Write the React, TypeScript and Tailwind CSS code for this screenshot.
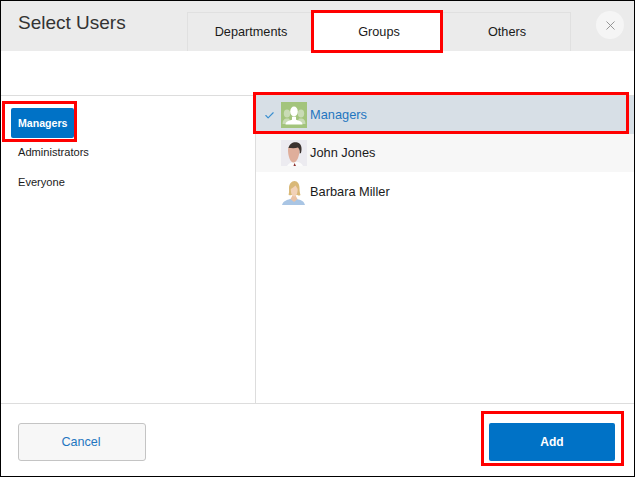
import { Check, X } from 'lucide-react'

function GroupAvatar() {
  return (
    <svg width="26" height="26" viewBox="0 0 26 26" className="shrink-0">
      <rect width="26" height="26" fill="#a3c47c" />
      <g fill="#c9dbb5">
        <ellipse cx="6" cy="11.500" rx="3.200" ry="4" />
        <path d="M1.500 22c0-3.500 1.500-5 3.500-5.500h3l3 5.500z" />
        <ellipse cx="20" cy="11.500" rx="3.200" ry="4" />
        <path d="M24.500 22c0-3.500-1.500-5-3.500-5.500h-3l-3 5.500z" />
      </g>
      <ellipse cx="13" cy="9.500" rx="3.800" ry="5" fill="#fff" />
      <path d="M4.500 22.500c0-3.500 4-3.800 6.500-4.800v-3h4v3c2.500 1 6.500 1.300 6.500 4.800z" fill="#fff" />
    </svg>
  )
}

function JohnAvatar() {
  return (
    <svg width="26" height="26" viewBox="0 0 26 26" className="shrink-0">
      <rect width="26" height="26" fill="#ecebf0" />
      <path d="M6 26c1-2.500 4-3.500 6-4h5c2 .5 4 1.500 5 4z" fill="#fbfbfb" />
      <path d="M12.500 26l1-3 1.500 3z" fill="#8a3030" />
      <path d="M7 10c0-4 3-6 6.500-5.500 3.500.5 5.500 3 5 7-.5 5-2.500 11-6 11-3.500 0-5.500-7-5.500-12.500z" fill="#dfae9b" />
      <path d="M7.500 8c1-4.500 5-6.500 9-5.500 3.500 1 5 5 3.500 10.500l-1.300.5c.3-2.500-.2-4.500-1.700-6-3 1-6.500 .5-9.500 .5z" fill="#3a322e" />
    </svg>
  )
}

function BarbaraAvatar() {
  return (
    <svg width="26" height="26" viewBox="0 0 26 26" className="shrink-0">
      <rect width="26" height="26" fill="#fff" />
      <path d="M1 26c1-4 5-5 8-6h7c4 1 7 2 8 6z" fill="#a9c5e4" />
      <path d="M9.500 20l3.500 3 3.500-3-2-3.500h-3z" fill="#eac2a5" />
      <path d="M8 9c0-4 2.500-7 5.500-7s5 3 5 7c0 3 .5 5.500 1 7-1.500 1-2.500.5-3 0h-6c-1 .5-2 .5-3-.5 .8-1.500.5-3.500.5-6.500z" fill="#d9b877" />
      <path d="M9.800 10c1.500-1 3.200-2 4.700-3.500 1 1.500 1.700 2.500 2.200 3.500 0 4-1.200 7.500-3.500 7.500s-3.400-3.500-3.400-7.500z" fill="#f2d2b8" />
    </svg>
  )
}

function Row({ name, avatar, className = '' }: { name: string; avatar: React.ReactNode; className?: string }) {
  return (
    <div className={`flex items-center gap-[3px] pl-[25px] text-[12.8px] text-[#1a1a1a] ${className}`}>
      {avatar}
      <span>{name}</span>
    </div>
  )
}

export default function App() {
  return (
    <div className="flex h-[477px] w-[635px] flex-col overflow-hidden border border-black bg-white font-['Liberation_Sans',Arial,sans-serif]">
      <div className="flex h-[50px] shrink-0 items-end bg-[#ebebeb] pr-[10px]">
        <div className="h-full w-[186px] pl-[17px] pt-[10px] text-[19px] leading-[24px] text-[#333]">
          Select Users
        </div>
        <div className="flex h-[39px] border-t border-l border-r border-[#e0e0e0]">
          <div className="flex w-[124px] items-center justify-center pl-[2px] pt-[1px] text-[12.7px] text-[#1a1a1a]">Departments</div>
          <div className="relative z-10 flex w-[130px] items-center justify-center bg-white pl-[4px] pt-[1px] text-[12.7px] text-[#1a1a1a]">
            Groups
            <div className="absolute -top-[3px] -right-[1px] -bottom-[2px] -left-[1px] border-[3px] border-[#f00]" />
          </div>
          <div className="flex w-[128px] items-center justify-center pl-[2px] pt-[1px] text-[12.7px] text-[#1a1a1a]">Others</div>
        </div>
        <div className="ml-auto mb-[12px] flex h-[28px] w-[28px] items-center justify-center self-end rounded-full bg-[#f5f5f5] text-[#888]">
          <X size={15} strokeWidth={1.4} />
        </div>
      </div>

      <div className="h-[45px] shrink-0 border-b border-[#dddddd]" />

      <div className="flex min-h-0 flex-1">
        <div className="w-[255px] shrink-0 border-r border-[#dddddd] text-[11.1px] text-[#1a1a1a]">
          <div className="relative ml-[10px] mt-[12px] flex h-[30px] w-[63px] items-center rounded-[2px] bg-[#0072c6] pl-[7px] pt-[1px] text-[10.6px] font-bold text-white">
            Managers
            <div className="absolute -top-[7px] -left-[9px] h-[41px] w-[75px] border-[3px] border-[#f00]" />
          </div>
          <div className="mt-[7px] flex h-[15px] items-center pl-[17px]">Administrators</div>
          <div className="mt-[15px] flex h-[15px] items-center pl-[17px]">Everyone</div>
        </div>

        <div className="min-w-0 flex-1">
          <div className="relative flex h-[38px] items-center bg-[#d7dfe6] pl-[8px] text-[12.8px] text-[#1f76c0]">
            <Check size={11} strokeWidth={2.5} className="w-[11px] shrink-0 text-[#3a8fd0]" />
            <span className="ml-[6px]"><GroupAvatar /></span>
            <span className="ml-[3px]">Managers</span>
            <div className="absolute -top-[4px] -left-[3px] h-[42px] w-[376px] border-[3px] border-[#f00]" />
          </div>
          <Row name="John Jones" avatar={<JohnAvatar />} className="h-[38px] bg-[#f7f7f7]" />
          <Row name="Barbara Miller" avatar={<BarbaraAvatar />} className="h-[39px]" />
        </div>
      </div>

      <div className="flex h-[73px] shrink-0 items-start justify-between border-t border-[#dddddd] pt-[19px] pl-[17px] pr-[19px]">
        <button className="h-[38px] w-[128px] rounded-[3px] border border-[#c4c4c4] bg-[#f7f7f7] pr-[2px] text-[12.6px] text-[#1f76c0]">
          Cancel
        </button>
        <div className="relative">
          <button className="h-[38px] w-[126px] rounded-[2px] bg-[#0072c6] text-[12px] font-bold text-white">
            Add
          </button>
          <div className="absolute -top-[12px] -left-[8px] h-[55px] w-[143px] border-[3px] border-[#f00]" />
        </div>
      </div>
    </div>
  )
}
